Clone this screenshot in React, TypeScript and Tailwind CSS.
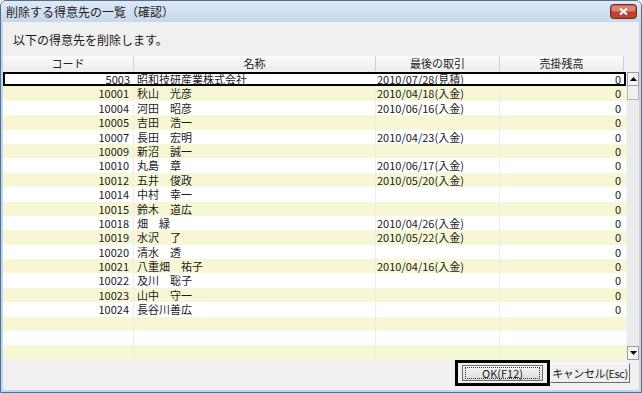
const rows = [
  { code: "5003", name: "昭和技研産業株式会社", last: "2010/07/28(見積)" },
  { code: "10001", name: "秋山　光彦", last: "2010/04/18(入金)" },
  { code: "10004", name: "河田　昭彦", last: "2010/06/16(入金)" },
  { code: "10005", name: "吉田　浩一", last: "" },
  { code: "10007", name: "長田　宏明", last: "2010/04/23(入金)" },
  { code: "10009", name: "新沼　誠一", last: "" },
  { code: "10010", name: "丸島　章", last: "2010/06/17(入金)" },
  { code: "10012", name: "五井　俊政", last: "2010/05/20(入金)" },
  { code: "10014", name: "中村　幸一", last: "" },
  { code: "10015", name: "鈴木　道広", last: "" },
  { code: "10018", name: "畑　緑", last: "2010/04/26(入金)" },
  { code: "10019", name: "水沢　了", last: "2010/05/22(入金)" },
  { code: "10020", name: "清水　透", last: "" },
  { code: "10021", name: "八重畑　祐子", last: "2010/04/16(入金)" },
  { code: "10022", name: "及川　聡子", last: "" },
  { code: "10023", name: "山中　守一", last: "" },
  { code: "10024", name: "長谷川善広", last: "" },
];

const font = "font-['Liberation_Sans_Narrow','Noto_Sans_CJK_JP',sans-serif]";

function Arrow({ up }: { up?: boolean }) {
  return (
    <svg width="7" height="4" viewBox="0 0 7 4">
      <path d={up ? "M0 4L3.5 0L7 4Z" : "M0 0L7 0L3.5 4Z"} fill="#000" />
    </svg>
  );
}

// Win7 basic close button
function CloseButton() {
  return (
    <svg width="27" height="15" viewBox="0 0 27 15" className="ml-auto mt-[3px] shrink-0">
      <rect x="0.5" y="0.5" width="26" height="14" rx="3" fill="#c0402f" stroke="#6e2a22" />
      <rect x="1.5" y="1.5" width="24" height="6" rx="2" fill="#dc8474" />
      <path d="M10 4.5L17 10.5M17 4.5L10 10.5" stroke="#ffffff" strokeWidth="2" />
    </svg>
  );
}

export default function App() {
  const filled = [...rows, null, null, null];

  return (
    <div className="w-[642px] h-[393px] flex flex-col bg-[#c3d5ec] border border-[#53708f] rounded-t-[6px] overflow-hidden font-['Noto_Sans_CJK_JP',sans-serif] text-[#1a1a1a]">
      {/* title bar */}
      <div className="h-[21px] shrink-0 flex items-start pl-[5px] pr-[4px] bg-gradient-to-b from-[#dfe9f6] to-[#c6d7ed]">
        <span className="mt-[4px] text-[12px] leading-[13px] text-[#222]">削除する得意先の一覧（確認）</span>
        <CloseButton />
      </div>

      {/* client area */}
      <div className="flex-1 mx-[2px] mb-[2px] flex flex-col bg-[#f0f0f0]">
        <div className="h-[34px] shrink-0 flex items-center pl-[10px] pt-[2px] text-[12px]">以下の得意先を削除します。</div>

        {/* header */}
        <div className={`h-[15px] shrink-0 flex text-[11px] leading-[15px] text-[#222] ${font}`}>
          <div className="w-[131px] text-center bg-gradient-to-b from-[#fafafa] to-[#ededed] border-r border-[#cfcfcf]">コード</div>
          <div className="w-[242px] text-center bg-gradient-to-b from-[#fafafa] to-[#ededed] border-r border-[#cfcfcf]">名称</div>
          <div className="w-[124px] text-center bg-gradient-to-b from-[#fafafa] to-[#ededed] border-r border-[#cfcfcf]">最後の取引</div>
          <div className="w-[124px] text-center bg-gradient-to-b from-[#fafafa] to-[#ededed] border-r border-[#cfcfcf]">売掛残高</div>
        </div>

        {/* grid + scrollbar */}
        <div className="flex mt-[1px]">
          <div className={`w-[623px] flex flex-col text-[11px] leading-[14px] ${font}`}>
            {filled.map((r, i) => {
              const bg = i % 2 === 1 ? "bg-[#f7f7d6]" : "bg-white";
              const sel = i === 0;
              const cell = sel ? "" : "border-r border-[#ececec]";
              return (
                <div
                  key={i}
                  className={`h-[14.4px] flex items-center overflow-hidden ${bg} ${sel ? "ring-2 ring-inset ring-black" : ""}`}
                >
                  <div className={`w-[131px] h-full pr-[4px] text-right ${cell}`}>{r?.code}</div>
                  <div className={`w-[242px] h-full pl-[3px] ${cell}`}>{r?.name}</div>
                  <div className={`w-[124px] h-full pl-[1px] ${cell}`}>{r?.last}</div>
                  <div className="w-[126px] h-full pr-[5px] text-right">{r ? "0" : ""}</div>
                </div>
              );
            })}
          </div>

          {/* scrollbar */}
          <div className="w-[12px] ml-[1px] flex flex-col bg-[#ebebeb]">
            <div className="h-[14px] flex items-center justify-center bg-[#f4f4f4] border border-[#a0a0a0]">
              <Arrow up />
            </div>
            <div className="h-[14px] bg-[#f0f0f0] border-x border-b border-[#b6b6b6]" />
            <div className="flex-1" />
            <div className="h-[14px] flex items-center justify-center bg-[#f4f4f4] border border-[#a0a0a0]">
              <Arrow />
            </div>
          </div>
        </div>

        {/* buttons */}
        <div className="flex-1 flex justify-end items-center pr-[9px] pb-[3px]">
          <div className="w-[95px] h-[26px] border-[3px] border-black flex items-center justify-center">
            <div className="w-[81px] h-[16px] bg-gradient-to-b from-[#f6f6f6] to-[#dcdcdc] border border-[#707070] flex items-center justify-center">
              <div className={`w-[75px] h-[12px] border border-dotted border-[#333] text-center text-[11px] leading-[10px] ${font}`}>OK(F12)</div>
            </div>
          </div>
          <div className={`w-[80px] h-[20px] whitespace-nowrap bg-[#f0f0f0] border-t border-l border-white border-r border-b border-r-[#6a6a6a] border-b-[#6a6a6a] flex items-center justify-center text-[11px] leading-none tracking-[-0.4px] ${font}`}>
            キャンセル(Esc)
          </div>
        </div>
      </div>
    </div>
  );
}
